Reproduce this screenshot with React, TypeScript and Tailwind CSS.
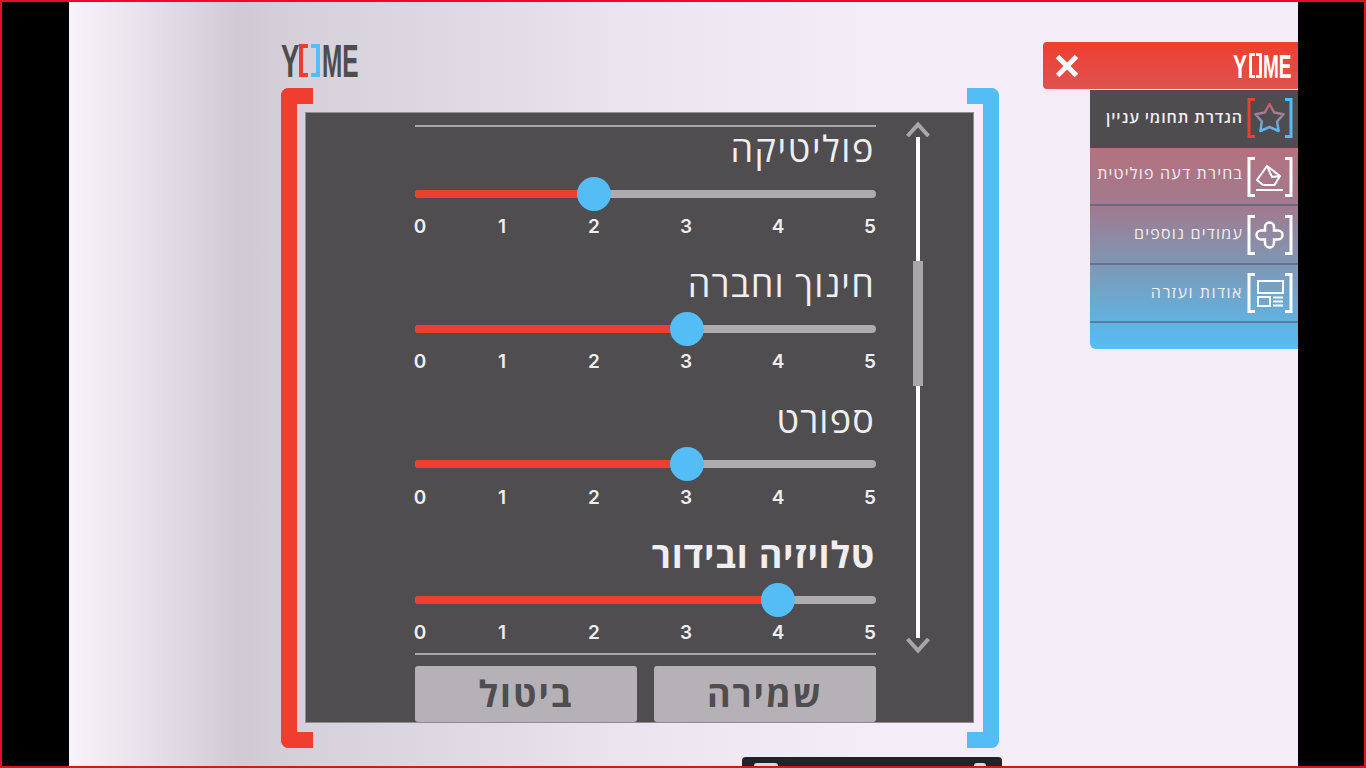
const HEB = "font-['Open_Sans','Liberation_Sans',sans-serif]";

const topics = [
	{ title: "פוליטיקה", value: 179, style: "font-normal tracking-[1.6px]" },
	{ title: "חינוך וחברה", value: 272, style: "font-medium tracking-[1.2px]" },
	{ title: "ספורט", value: 272, style: "font-normal tracking-[1.2px]" },
	{ title: "טלויזיה ובידור", value: 363, style: "font-bold tracking-[0.8px]" },
];

function Logo({ light }: { light?: boolean }) {
	if (light) {
		return (
			<div className="flex h-[25px] items-center font-['Liberation_Sans',sans-serif] text-[34px] font-bold text-white">
				<span className="w-[15px] origin-left scale-x-[.62] leading-none">Y</span>
				<span className="ml-[1px] h-[25px] w-[6px] border-y-[3px] border-l-[3px] border-white" />
				<span className="ml-[1px] h-[25px] w-[6px] border-y-[3px] border-r-[3px] border-white" />
				<span className="ml-[1px] w-[29px] origin-left scale-x-[.56] leading-none whitespace-nowrap">ME</span>
			</div>
		);
	}
	return (
		<div className="flex h-[33px] items-center font-['Liberation_Sans',sans-serif] text-[46px] font-bold text-[#4e4c50]">
			<span className="w-[18px] origin-left scale-x-[.6] leading-none">Y</span>
			<span className="h-[33px] w-[9px] border-y-[4px] border-l-[4px] border-[#ef3e2f]" />
			<span className="ml-[3px] h-[33px] w-[9px] border-y-[4px] border-r-[4px] border-[#55bdf5]" />
			<span className="ml-[2px] w-[36px] origin-left scale-x-[.53] leading-none whitespace-nowrap">ME</span>
		</div>
	);
}

function Topic({ title, value, style }: { title: string; value: number; style: string }) {
	return (
		<div className="h-[135.4px]">
			<div
				dir="rtl"
				className={`h-[50px] pr-[1px] text-[36px] leading-[44px] whitespace-nowrap text-[#f1eef2] ${style}`}
			>
				{title}
			</div>
			<div className="relative mt-[12.5px] h-[8px] rounded-full bg-[#aeaaad]">
				<div className="h-full rounded-full bg-[#ef3e2f]" style={{ width: value }} />
				<div
					className="absolute top-[-13px] ml-[-17px] h-[34px] w-[34px] rounded-full bg-[#55bdf5]"
					style={{ left: value }}
				/>
			</div>
			<div className="mt-[17.5px] flex gap-[82px] font-['Inter',sans-serif] text-[19px] leading-[24px] font-semibold text-[#f1eef2]">
				{[0, 1, 2, 3, 4, 5].map((n) => (
					<span
						key={n}
						className={`flex w-[10px] justify-center ${n === 0 ? "-mr-[10px]" : ""}`}
					>
						{n}
					</span>
				))}
			</div>
		</div>
	);
}

function Chevron({ up }: { up?: boolean }) {
	return (
		<svg width="24" height="16" viewBox="0 0 24 16" fill="none" className="shrink-0">
			<path
				d={up ? "M1.500 15 L12 3.500 L22.500 15" : "M1.500 1 L12 12.500 L22.500 1"}
				stroke="#a9a6a9"
				strokeWidth="4"
			/>
		</svg>
	);
}

function IconBrackets({
	children,
	left = "#fff",
	right = "#fff",
}: {
	children: React.ReactNode;
	left?: string;
	right?: string;
}) {
	return (
		<svg width="46" height="40" viewBox="0 0 46 40" fill="none" className="shrink-0">
			<path d="M8 1.500 H2 V38.500 H8" stroke={left} strokeWidth="3" />
			<path d="M38 1.500 H44 V38.500 H38" stroke={right} strokeWidth="3" />
			{children}
		</svg>
	);
}

function MenuRow({
	label,
	icon,
	className,
	labelClass = "mb-[3px] tracking-[1.2px]",
}: {
	label: string;
	icon: React.ReactNode;
	className: string;
	labelClass?: string;
}) {
	return (
		<div className={`flex items-center justify-end gap-[4px] pr-[5px] ${className}`}>
			<span dir="rtl" className={`text-[16px] leading-none whitespace-nowrap ${labelClass}`}>
				{label}
			</span>
			{icon}
		</div>
	);
}

export default function App() {
	return (
		<div className={`flex h-screen overflow-hidden border-2 border-[#e4101e] bg-black ${HEB}`}>
			<div className="w-[67px] shrink-0" />
			<main className="flex w-[1229px] shrink-0 bg-[linear-gradient(90deg,#f8f2fa_0px,#e5dee8_90px,#d1cad4_170px,#d5d0da_230px,#e0dae5_400px,#ece4ee_560px,#f4ecf6_800px)]">
				<section className="ml-[212px] w-[719px] pt-[42px]">
					<Logo />
					<div className="mt-[11px] flex h-[660px]">
						<div className="h-full w-[32px] shrink-0 rounded-l-[8px] border-y-[16px] border-l-[16px] border-[#ef3e2f]" />
						<div className="mt-[24px] -mr-[7px] -ml-[8px] flex h-[611px] w-[669px] shrink-0 border border-[#8f8c90] bg-[#4f4d50] pl-[109px]">
							<div className="w-[461px] shrink-0 pt-[12px]">
								<div className="h-[2px] bg-[#a9a6a9]" />
								{topics.map((t) => (
									<Topic key={t.title} {...t} />
								))}
								<div className="mt-[-15.6px] h-[2px] bg-[#a9a6a9]" />
								<div className="mt-[11px] flex justify-between">
									<button className="h-[56px] w-[222px] rounded-[3px] bg-[#b5b1b6] text-[36px] leading-none font-bold tracking-[2px] text-[#4f4d50]">
										ביטול
									</button>
									<button className="h-[56px] w-[222px] rounded-[3px] bg-[#b5b1b6] text-[36px] leading-none font-bold tracking-[2px] text-[#4f4d50]">
										שמירה
									</button>
								</div>
							</div>
							<div className="relative mt-[8px] ml-[30px] flex h-[533px] w-[24px] flex-col items-center">
								<Chevron up />
								<div className="h-[501px] w-[4px] bg-white" />
								<Chevron />
								<div className="absolute top-[140px] h-[125px] w-[10px] bg-[#a9a6a9]" />
							</div>
						</div>
						<div className="h-full w-[32px] shrink-0 rounded-r-[8px] border-y-[16px] border-r-[16px] border-[#55bdf5]" />
					</div>
				</section>
				<aside className="ml-[43px] w-[255px] shrink-0 pt-[40px]">
					<div className="flex h-[47px] items-center justify-between rounded-l-[4px] bg-[linear-gradient(180deg,#ef3e2f,#dd5350)] pr-[6px] pl-[12px]">
						<svg width="24" height="24" viewBox="0 0 24 24" fill="none">
							<path d="M2.500 2.500 L21.500 21.500 M21.500 2.500 L2.500 21.500" stroke="#fff" strokeWidth="5" />
						</svg>
						<Logo light />
					</div>
					<div className="ml-[47px]">
						<MenuRow
							label="הגדרת תחומי עניין"
							labelClass="mb-[3px] tracking-[0.85px]"
							className="mt-[1px] h-[58px] bg-[#4e4c4f] pb-[2px] font-semibold text-[#f1eef2]"
							icon={
								<IconBrackets left="#ef3e2f" right="#55bdf5">
									<defs>
										<linearGradient id="star" x1="0" y1="0" x2="0" y2="1">
											<stop offset="0" stopColor="#cf5a5e" />
											<stop offset="1" stopColor="#55bdf5" />
										</linearGradient>
									</defs>
									<path
										d="M22.500 6 L27.200 14.500 L36.500 16.200 L30.100 23.500 L31.600 33 L22.500 29 L13.400 33 L14.900 23.500 L8.500 16.200 L17.800 14.500 Z"
										stroke="url(#star)"
										strokeWidth="2.500"
										strokeLinejoin="round"
									/>
								</IconBrackets>
							}
						/>
						<div className="overflow-hidden rounded-bl-[6px] bg-[linear-gradient(180deg,#b4727e,#a07a90_30%,#7c9ab8_60%,#55bdf5)] font-medium text-[#f1eef2]">
							<MenuRow
								label="בחירת דעה פוליטית"
								labelClass="mb-[8px] tracking-[1.2px]"
								className="h-[58px] border-b-2 border-[#6c6880] pt-[2px]"
								icon={
									<IconBrackets>
										<path
											d="M10 23 L20 9 L33 19 L27.500 28 H16 Z M20 9 L25 20 L33 19 M9 33 H36"
											stroke="#fff"
											strokeWidth="2"
											strokeLinejoin="round"
										/>
									</IconBrackets>
								}
							/>
							<MenuRow
								label="עמודים נוספים"
								className="h-[59px] border-b-2 border-[#68708f]"
								icon={
									<IconBrackets>
										<path
											d="M18 12 a4.500 4.500 0 0 1 9 0 V15.500 H31 a4.500 4.500 0 0 1 0 9 H27 V28 a4.500 4.500 0 0 1 -9 0 V24.500 H14 a4.500 4.500 0 0 1 0 -9 H18 Z"
											stroke="#fff"
											strokeWidth="2.500"
										/>
									</IconBrackets>
								}
							/>
							<MenuRow
								label="אודות ועזרה"
								labelClass="mb-[3px] tracking-[1.5px]"
								className="h-[58px] border-b-2 border-[#5b7a9d]"
								icon={
									<IconBrackets>
										<path
											d="M11 8 H36 V20 H11 Z M11 24 H23 V33 H11 Z M26 24.500 H36 M26 28.500 H36 M26 32.500 H36"
											stroke="#fff"
											strokeWidth="2"
										/>
									</IconBrackets>
								}
							/>
							<div className="h-[26px]" />
						</div>
					</div>
				</aside>
			</main>
			<div className="absolute bottom-[2px] left-[742px] flex h-[9px] w-[260px] items-end justify-between rounded-t-[4px] bg-[#222324] pr-[16px] pl-[12px]">
				<span className="h-[3px] w-[24px] rounded-t-[3px] bg-[#d8d8d8]" />
				<span className="h-[3px] w-[12px] rounded-t-full bg-[#d8d8d8]" />
			</div>
		</div>
	);
}
